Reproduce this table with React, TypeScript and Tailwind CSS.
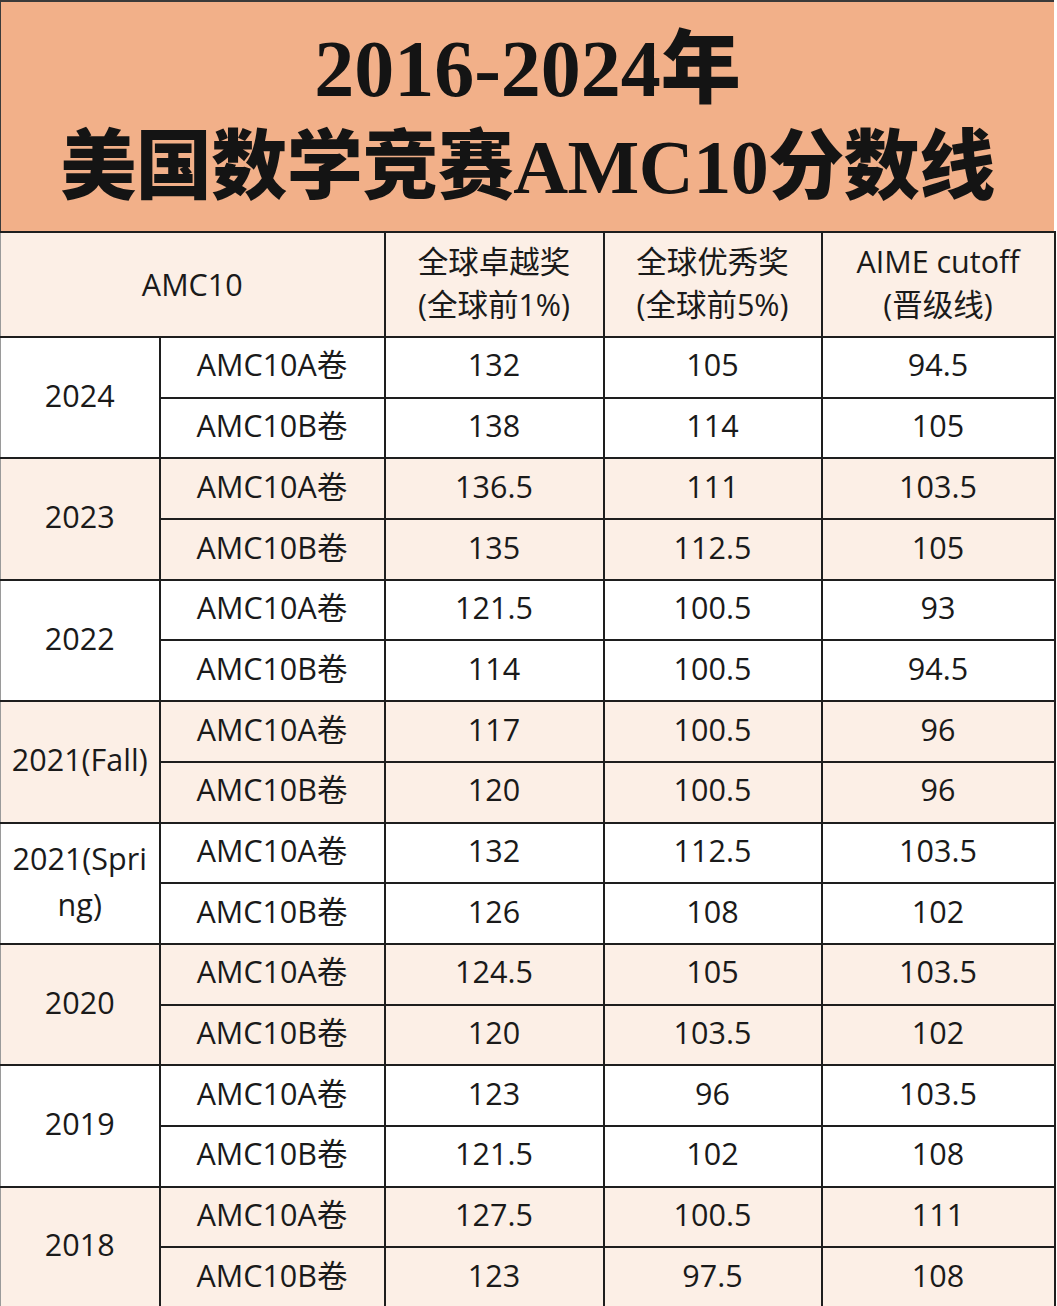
const rows = [
  { year: "2024", a: ["132", "105", "94.5"], b: ["138", "114", "105"] },
  { year: "2023", a: ["136.5", "111", "103.5"], b: ["135", "112.5", "105"] },
  { year: "2022", a: ["121.5", "100.5", "93"], b: ["114", "100.5", "94.5"] },
  { year: "2021(Fall)", a: ["117", "100.5", "96"], b: ["120", "100.5", "96"] },
  { year: "2021(Spring)", a: ["132", "112.5", "103.5"], b: ["126", "108", "102"] },
  { year: "2020", a: ["124.5", "105", "103.5"], b: ["120", "103.5", "102"] },
  { year: "2019", a: ["123", "96", "103.5"], b: ["121.5", "102", "108"] },
  { year: "2018", a: ["127.5", "100.5", "111"], b: ["123", "97.5", "108"] },
];

const sans = "font-['Open_Sans','Noto_Sans_CJK_SC',sans-serif]";
const cell = "border-2 border-[#1e1e1e] text-center align-middle";

export default function App() {
  return (
    <div className={`w-[1057px] h-[1306px] overflow-hidden bg-white text-[#1a1a1a] ${sans}`}>
      {/* Title */}
      <div className="h-[231px] w-[1054px] border-t-2 border-l border-[#3a3a3a] bg-[#f2b089] flex flex-col items-center justify-center font-['Liberation_Serif','Noto_Sans_CJK_SC',serif] font-black text-[#141414]">
        <div className="text-[80px] leading-[98px] mt-[2px] tracking-[0px]">2016-2024年</div>
        <div className="text-[76px] leading-[98px] tracking-[-0.5px]">美国数学竞赛AMC10分数线</div>
      </div>

      <table className="w-[1054px] border-collapse table-fixed text-[30.5px]">
        <colgroup>
          <col className="w-[159px]" />
          <col className="w-[225px]" />
          <col className="w-[219px]" />
          <col className="w-[218px]" />
          <col className="w-[233px]" />
        </colgroup>
        <thead>
          <tr className="h-[105px] bg-[#fcefe6]">
            <th colSpan={2} className={`${cell} border-l border-l-[#9a9a9a] font-normal`}>AMC10</th>
            <th className={`${cell} font-normal leading-[43px] pb-1`}>
              全球卓越奖
              <br />
              (全球前1%)
            </th>
            <th className={`${cell} font-normal leading-[43px] pb-1`}>
              全球优秀奖
              <br />
              (全球前5%)
            </th>
            <th className={`${cell} font-normal leading-[43px] pb-1`}>
              AIME cutoff
              <br />
              (晋级线)
            </th>
          </tr>
        </thead>
        <tbody>
          {rows.map((r, i) => {
            const bg = i % 2 === 1 ? "bg-[#fcefe6]" : "bg-white";
            return [
              <tr key={r.year + "a"} className={`h-[60.7px] ${bg}`}>
                <td rowSpan={2} className={`${cell} border-l border-l-[#9a9a9a] px-0 pb-1`}>
                  {r.year === "2021(Spring)" ? (
                    <span className="block leading-[46px]">
                      2021(Spri
                      <br />
                      ng)
                    </span>
                  ) : (
                    r.year
                  )}
                </td>
                <td className={`${cell} pb-1`}>AMC10A卷</td>
                {r.a.map((v, j) => (
                  <td key={j} className={`${cell} pb-1`}>
                    {v}
                  </td>
                ))}
              </tr>,
              <tr key={r.year + "b"} className={`h-[60.7px] ${bg}`}>
                <td className={`${cell} pb-1`}>AMC10B卷</td>
                {r.b.map((v, j) => (
                  <td key={j} className={`${cell} pb-1`}>
                    {v}
                  </td>
                ))}
              </tr>,
            ];
          })}
        </tbody>
      </table>
    </div>
  );
}
